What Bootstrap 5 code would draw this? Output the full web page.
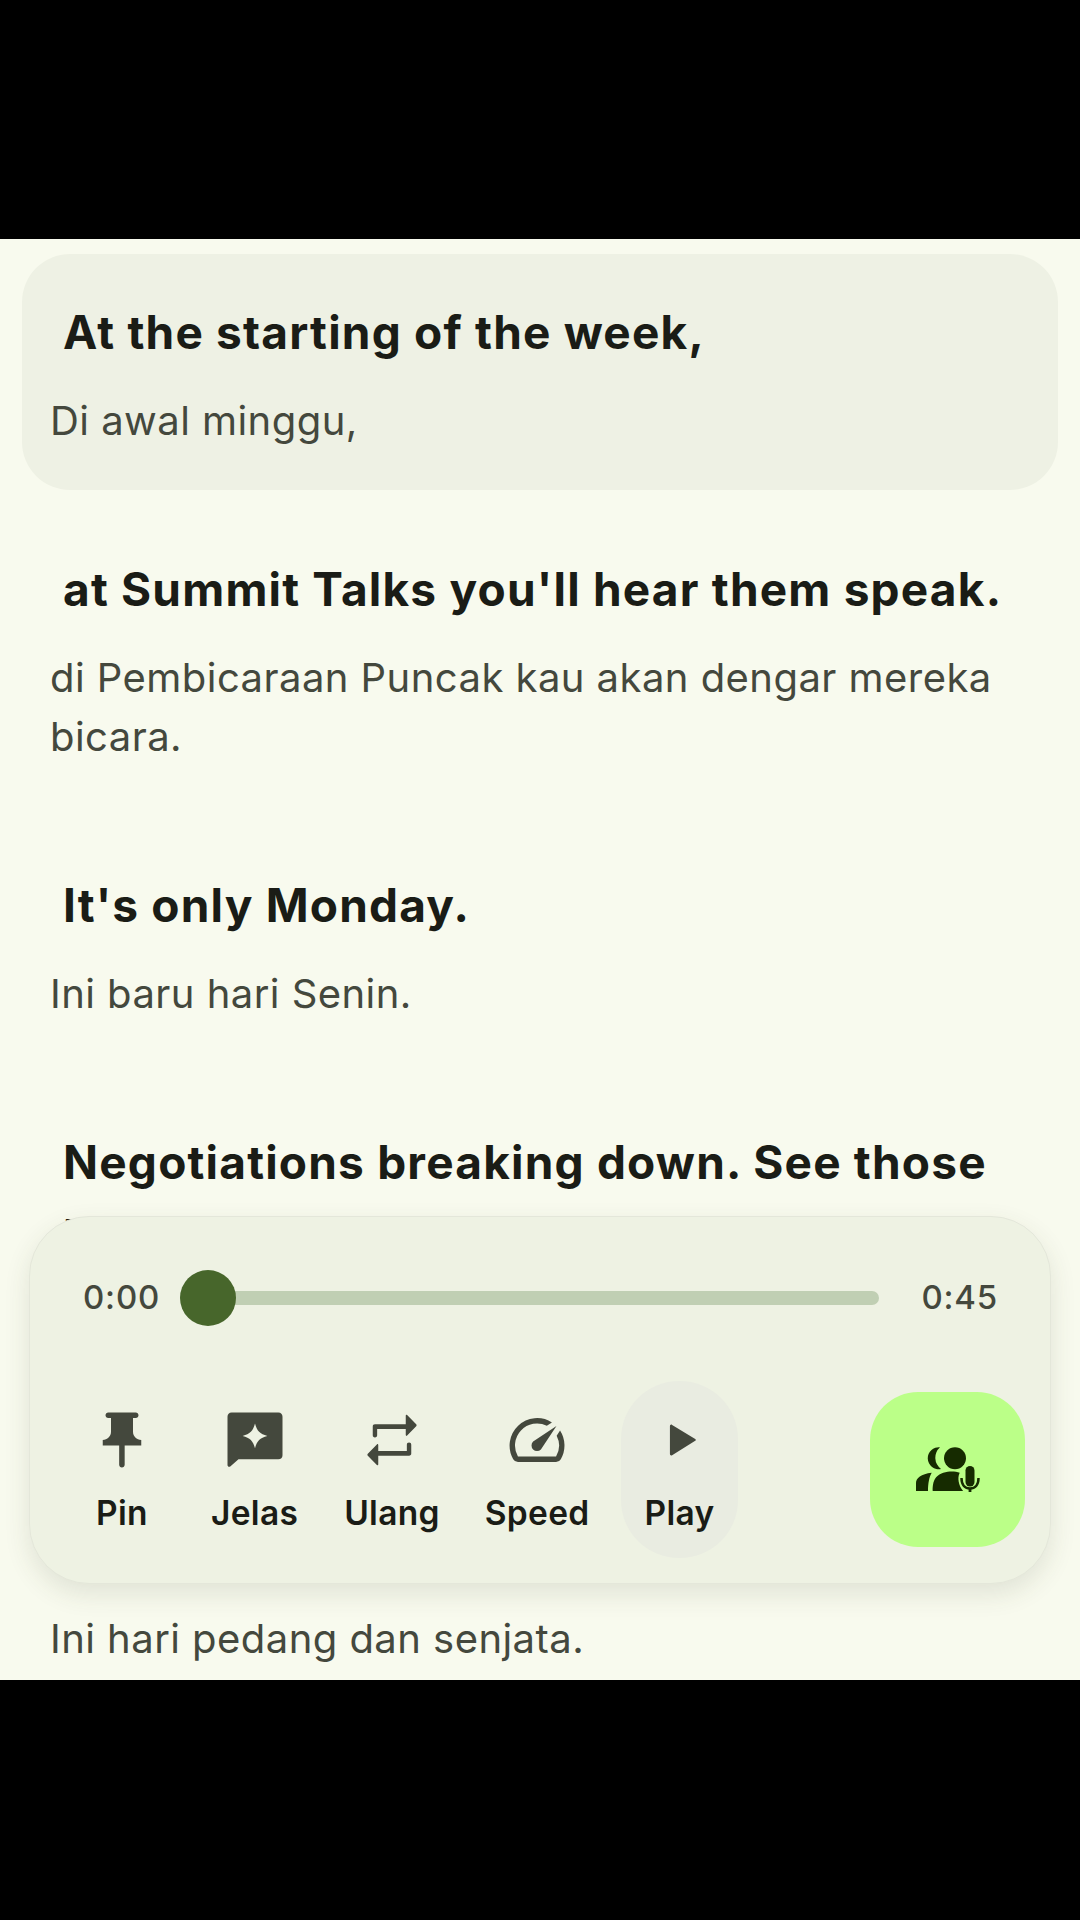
<!doctype html>
<html lang="en">
<head>
<meta charset="utf-8">
<title>Player</title>
<link href="https://cdn.jsdelivr.net/npm/bootstrap@5.3.0/dist/css/bootstrap.min.css" rel="stylesheet">
<style>
html,body{background:#000;margin:0;height:1920px;overflow:hidden;font-family:Inter,"Liberation Sans",sans-serif}
.topgap{height:239px}
.screen{height:1441px;background:#f8faee;padding:15px 22px 0;overflow:hidden}
.cue{padding:41px 28px 0;height:236px;margin-bottom:21px;border-radius:48px}
.cue.tall{height:295px}
.cue.now{background:#eef1e4}
.cue-en{font-size:46px;font-weight:700;line-height:74px;color:#1a1c16;padding-left:13px;margin:0;letter-spacing:1.2px;white-space:nowrap}
.cue-id{font-size:40px;font-weight:400;line-height:59px;color:#44483d;margin:22px 0 0;letter-spacing:.45px}
.cue-last{padding:0 28px;margin-top:289px}
.cue-last .cue-id{margin:0}
.dock{left:29px;top:977px;width:1022px;height:368px;background:#eef2e3;border:1.5px solid #e4e7da;border-radius:60px;box-shadow:0 10px 26px rgba(60,65,45,.12)}
.seek{padding:0 52px 0 53px;height:56px;margin-top:53px}
.clock{font-size:33px;font-weight:500;color:#44483d;letter-spacing:.8px}
.rail{height:14px;background:#c0cfb3;border-radius:7px;margin:0 42px 0 25px}
.knob{width:56px;height:56px;border-radius:50%;background:#47662b;left:-5px;top:-21px}
.tools{left:49px;top:164px}
.tool{padding:0 10px;border-radius:58px;height:177px;color:#1a1c16;background:transparent;border:0}
.tool svg{width:66px;height:66px;display:block;margin-top:26px;fill:#44483d}
.tool span{font-size:33.5px;font-weight:600;line-height:40px;margin-top:20px;letter-spacing:.3px}
.tool.on{padding:0 23.5px;background:#e9ece1}
.t2{margin-left:36px}.t3{margin-left:26px}.t4{margin-left:25px}.t5{margin-left:21.5px}
.talk{right:25px;top:175px;width:155px;height:155px;border-radius:48px;background:#bbff88;border:0}
.talk svg{width:64px;height:45px}
</style>
</head>
<body>
<div class="topgap"></div>
<div class="screen position-relative">
  <div class="cue now">
    <p class="cue-en">At the starting of the week,</p>
    <p class="cue-id">Di awal minggu,</p>
  </div>
  <div class="cue tall">
    <p class="cue-en">at Summit Talks you'll hear them speak.</p>
    <p class="cue-id">di Pembicaraan Puncak kau akan dengar mereka bicara.</p>
  </div>
  <div class="cue">
    <p class="cue-en">It's only Monday.</p>
    <p class="cue-id">Ini baru hari Senin.</p>
  </div>
  <div class="cue">
    <p class="cue-en">Negotiations breaking down. See those<br>b</p>
  </div>
  <div class="cue-last"><p class="cue-id">Ini hari pedang dan senjata.</p></div>

  <div class="dock position-absolute">
    <div class="seek d-flex align-items-center">
      <span class="clock">0:00</span>
      <div class="rail flex-grow-1 position-relative"><div class="knob position-absolute"></div></div>
      <span class="clock">0:45</span>
    </div>
    <div class="tools position-absolute d-flex align-items-start">
      <button class="tool d-flex flex-column align-items-center" type="button">
        <svg viewBox="0 0 24 24"><path d="M16 9V4h1c.55 0 1-.45 1-1s-.45-1-1-1H7c-.55 0-1 .45-1 1s.45 1 1 1h1v5c0 1.66-1.34 3-3 3v2h5.970v7c0 .55.45 1 1 1s1-.45 1-1v-7H19v-2c-1.66 0-3-1.34-3-3z"/></svg>
        <span>Pin</span>
      </button>
      <button class="tool t2 d-flex flex-column align-items-center" type="button">
        <svg viewBox="0 0 24 24"><path fill-rule="evenodd" d="M3.500 2h17c.9 0 1.500.6 1.500 1.500v14c0 .9-.6 1.500-1.500 1.500H6l-3 2.600c-.4.3-1 .1-1-.5V3.500C2 2.600 2.600 2 3.500 2zM12 6c-.7 2.700-1.800 3.800-4.500 4.500 2.700.7 3.800 1.800 4.500 4.500.7-2.700 1.800-3.800 4.500-4.500-2.700-.7-3.800-1.800-4.500-4.500z"/></svg>
        <span>Jelas</span>
      </button>
      <button class="tool t3 d-flex flex-column align-items-center" type="button">
        <svg viewBox="0 0 24 24"><path d="M6.600 6.300H17V3.100c0-.3.300-.4.500-.2l3.300 3.400c.2.200.2.5 0 .7l-3.300 3.400c-.2.200-.5.100-.5-.2V8H6.600v2.300c0 .5-.3.8-.8.8s-.8-.3-.8-.8V7.100c0-.5.300-.8.800-.8zM17.400 17.700H7v3.200c0 .3-.3.4-.5.2l-3.300-3.400c-.2-.2-.2-.5 0-.7l3.300-3.400c.2-.2.5-.1.500.2V16h10.400v-2.300c0-.5.300-.8.800-.8s.8.300.8.800v3.200c0 .5-.3.8-.8.8z"/></svg>
        <span>Ulang</span>
      </button>
      <button class="tool t4 d-flex flex-column align-items-center" type="button">
        <svg viewBox="0 0 24 24"><path d="M20.380 8.570l-1.230 1.850a8 8 0 0 1-.220 7.580H5.070A8 8 0 0 1 15.580 6.850l1.850-1.230A10 10 0 0 0 3.350 19a2 2 0 0 0 1.720 1h13.850a2 2 0 0 0 1.740-1 10 10 0 0 0-.280-10.430zM10.590 15.410a2 2 0 0 0 2.830 0l5.660-8.490-8.490 5.660a2 2 0 0 0 0 2.830z"/></svg>
        <span>Speed</span>
      </button>
      <button class="tool t5 on d-flex flex-column align-items-center" type="button">
        <svg viewBox="0 0 24 24"><path d="M8.700 7v10c0 .5.400.8.800.5l8.400-5.200c.3-.2.300-.5 0-.7L9.500 6.500c-.4-.3-.8 0-.8.500z"/></svg>
        <span>Play</span>
      </button>
    </div>
    <button class="talk position-absolute d-flex align-items-center justify-content-center" type="button" aria-label="Talk">
      <svg viewBox="0 0 64 45" fill="#162b00">
        <path d="M24 .3A11 11 0 1 0 25 22 A14 14 0 0 1 24 .3z"/>
        <circle cx="39" cy="11.300" r="11"/>
        <path d="M0 44V36c0-5 5-9 15.700-10.300-2.500 4-3.700 11-3.700 18.300z"/>
        <path d="M16.700 44c0-10 2-17 15-19.300 5-.5 9 0 12 1-1.500 3-1.500 6-1 9 .5 3 2 6.500 4.400 9.300z"/>
        <rect x="49.500" y="19" width="9" height="20.500" rx="4.500"/>
        <path d="M45.500 31c0 7 3.500 10.500 8.500 10.500s8.500-3.500 8.500-10.500" fill="none" stroke="#162b00" stroke-width="2.500"/>
        <path d="M54 41v4" fill="none" stroke="#162b00" stroke-width="2.800"/>
      </svg>
    </button>
  </div>
</div>
<script src="https://cdn.jsdelivr.net/npm/bootstrap@5.3.0/dist/js/bootstrap.bundle.min.js"></script>
</body>
</html>
